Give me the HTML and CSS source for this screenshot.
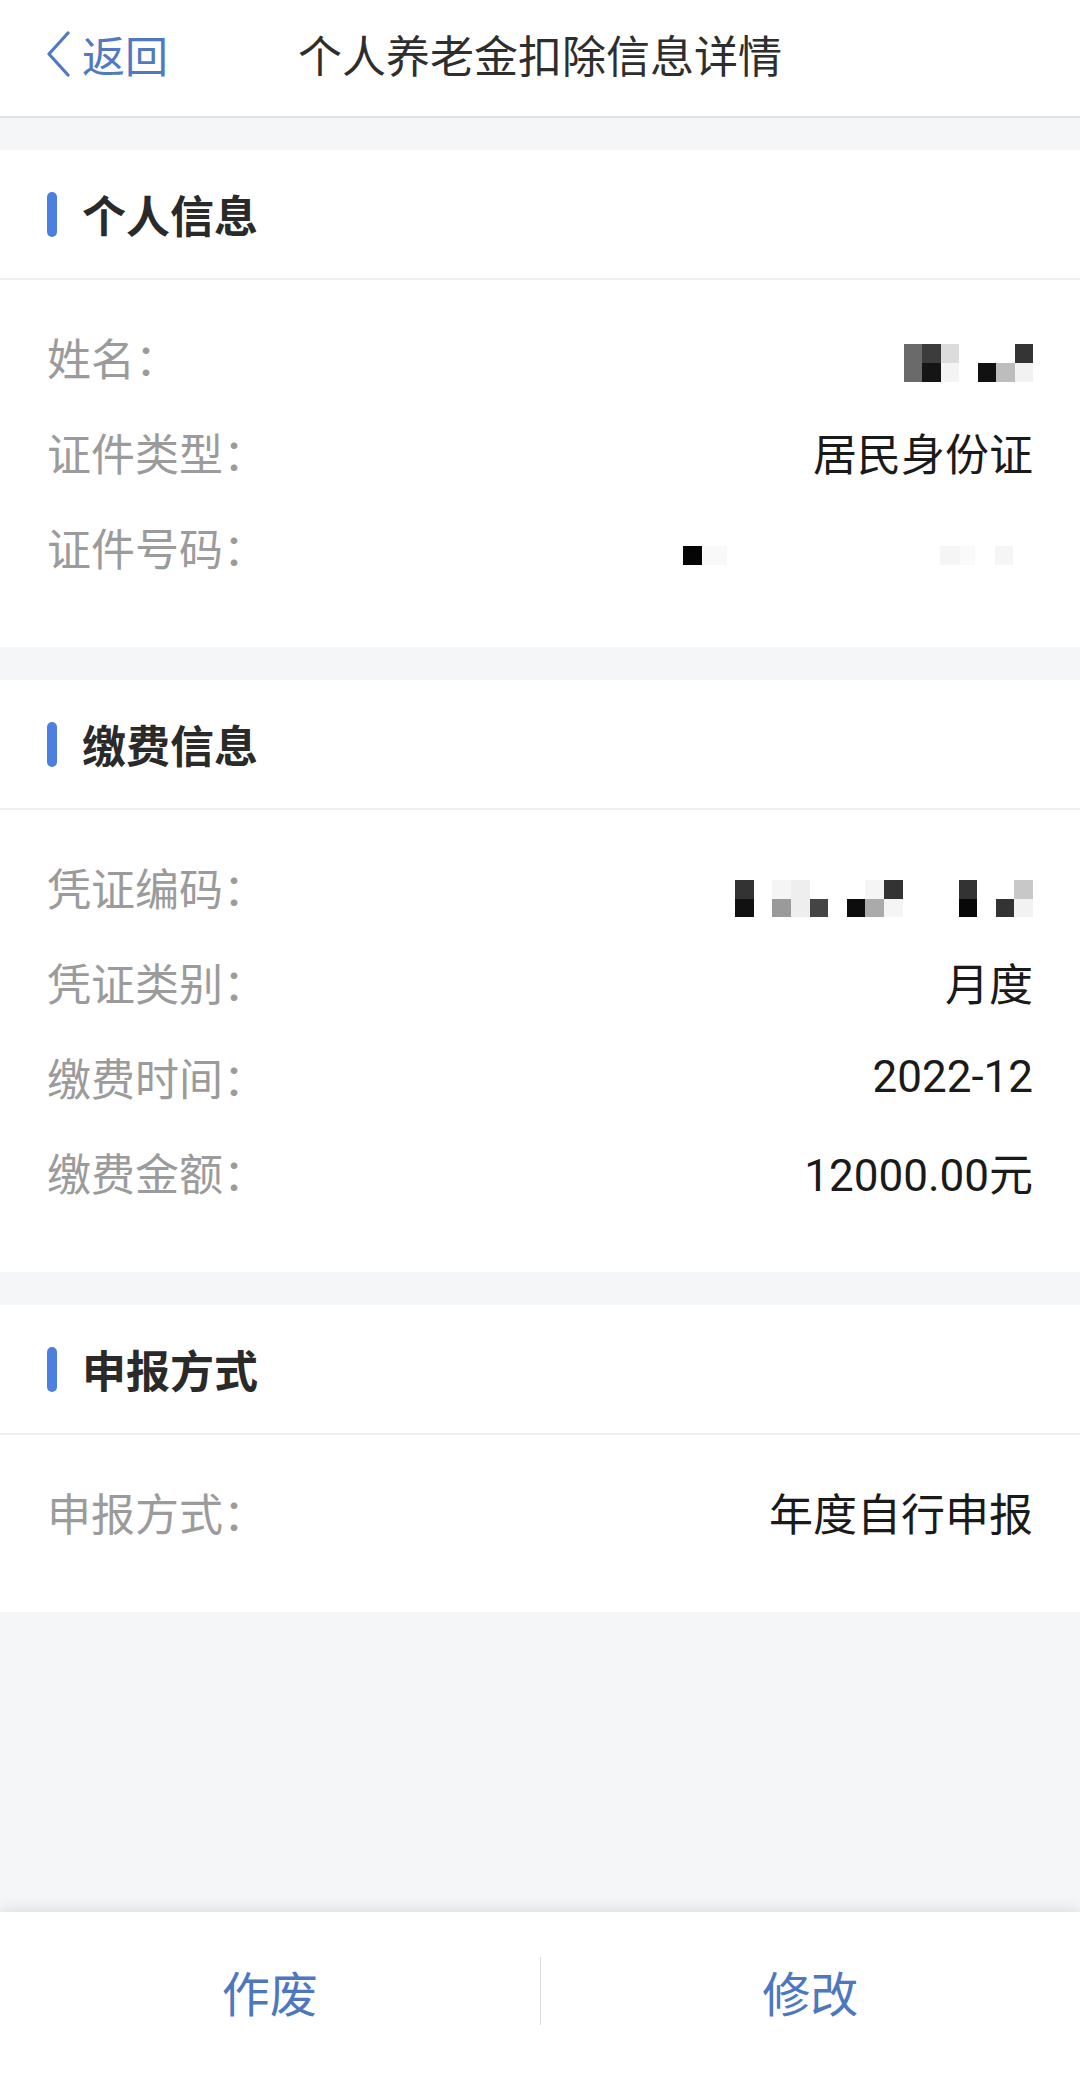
FILE: index.html
```html
<!DOCTYPE html>
<html lang="zh-CN">
<head>
  <meta charset="UTF-8">
  <title>个人养老金扣除信息详情</title>
  <meta name="viewport" content="width=device-width, initial-scale=1.0">
  <link rel="stylesheet" href="styles.css">
</head>
<body>

  <header class="nav-bar">
    <a class="nav-back" href="#">
      <svg class="nav-back-icon" width="26" height="46" viewBox="0 0 26 46">
        <path d="M23 2 L4 23 L23 44" fill="none" stroke="#5179c1" stroke-width="3.2" stroke-linecap="round" stroke-linejoin="round"/>
      </svg>
      <span>返回</span>
    </a>
    <h1 class="nav-title">个人养老金扣除信息详情</h1>
    <div></div>
  </header>

  <main class="page-body">

    <section class="info-card">
      <div class="card-head"><span class="card-mark"></span><h2>个人信息</h2></div>
      <div class="card-rows">
        <div class="info-row">
          <span class="info-label">姓名：</span>
          <svg class="mosaic mosaic-name" width="129" height="38" viewBox="0 0 7 2" preserveAspectRatio="none" shape-rendering="crispEdges">
            <rect x="0" y="0" width="1" height="2" fill="#6a6a6a"/>
            <rect x="1" y="0" width="1" height="1" fill="#3c3c3c"/>
            <rect x="1" y="1" width="1" height="1" fill="#151515"/>
            <rect x="2" y="0" width="1" height="1" fill="#dcdcdc"/>
            <rect x="2" y="1" width="1" height="1" fill="#f4f4f4"/>
            <rect x="4" y="1" width="1" height="1" fill="#111"/>
            <rect x="5" y="1" width="1" height="1" fill="#bdbdbd"/>
            <rect x="6" y="0" width="1" height="1" fill="#343434"/>
            <rect x="6" y="1" width="1" height="1" fill="#f2f2f2"/>
          </svg>
        </div>
        <div class="info-row">
          <span class="info-label">证件类型：</span>
          <span class="info-value">居民身份证</span>
        </div>
        <div class="info-row">
          <span class="info-label">证件号码：</span>
          <svg class="mosaic mosaic-id" width="350" height="19" viewBox="0 0 350 19" shape-rendering="crispEdges">
            <rect x="0" y="0" width="19" height="19" fill="#050505"/>
            <rect x="20" y="0" width="24" height="19" fill="#f9f9f9"/>
            <rect x="257" y="0" width="20" height="19" fill="#f5f5f5"/>
            <rect x="277" y="0" width="15" height="19" fill="#fafafa"/>
            <rect x="312" y="0" width="18" height="19" fill="#f5f5f5"/>
          </svg>
        </div>
      </div>
    </section>

    <section class="info-card">
      <div class="card-head"><span class="card-mark"></span><h2>缴费信息</h2></div>
      <div class="card-rows">
        <div class="info-row">
          <span class="info-label">凭证编码：</span>
          <svg class="mosaic mosaic-code" width="298" height="37" viewBox="0 0 16 2" preserveAspectRatio="none" shape-rendering="crispEdges">
            <rect x="0" y="0" width="1" height="1" fill="#333"/>
            <rect x="0" y="1" width="1" height="1" fill="#111"/>
            <rect x="2" y="0" width="1" height="1" fill="#f5f5f5"/>
            <rect x="2" y="1" width="1" height="1" fill="#9a9a9a"/>
            <rect x="3" y="0" width="1" height="2" fill="#eeeeee"/>
            <rect x="4" y="1" width="1" height="1" fill="#444"/>
            <rect x="6" y="1" width="1" height="1" fill="#0d0d0d"/>
            <rect x="7" y="0" width="1" height="1" fill="#f5f5f5"/>
            <rect x="7" y="1" width="1" height="1" fill="#aaaaaa"/>
            <rect x="8" y="0" width="1" height="1" fill="#333"/>
            <rect x="8" y="1" width="1" height="1" fill="#f5f5f5"/>
            <rect x="12" y="0" width="1" height="1" fill="#333"/>
            <rect x="12" y="1" width="1" height="1" fill="#080808"/>
            <rect x="14" y="1" width="1" height="1" fill="#333"/>
            <rect x="15" y="0" width="1" height="1" fill="#c8c8c8"/>
            <rect x="15" y="1" width="1" height="1" fill="#f2f2f2"/>
          </svg>
        </div>
        <div class="info-row">
          <span class="info-label">凭证类别：</span>
          <span class="info-value">月度</span>
        </div>
        <div class="info-row">
          <span class="info-label">缴费时间：</span>
          <span class="info-value">2022-12</span>
        </div>
        <div class="info-row">
          <span class="info-label">缴费金额：</span>
          <span class="info-value">12000.00元</span>
        </div>
      </div>
    </section>

    <section class="info-card">
      <div class="card-head"><span class="card-mark"></span><h2>申报方式</h2></div>
      <div class="card-rows">
        <div class="info-row">
          <span class="info-label">申报方式：</span>
          <span class="info-value">年度自行申报</span>
        </div>
      </div>
    </section>

  </main>

  <footer class="action-bar">
    <button class="action-btn" type="button">作废</button>
    <span class="action-divider"></span>
    <button class="action-btn" type="button">修改</button>
  </footer>

</body>
</html>
```

FILE: styles.css
```css
html, body {
  height: 100%;
}

body {
  margin: 0;
  display: flex;
  flex-direction: column;
  font-family: Roboto, "Noto Sans CJK SC", sans-serif;
  background: #f5f6f8;
  color: #1c1c1c;
}

/* top navigation */
.nav-bar {
  height: 118px;
  box-sizing: border-box;
  padding-bottom: 8px;
  flex-shrink: 0;
  display: grid;
  grid-template-columns: 1fr auto 1fr;
  align-items: center;
  background: #fff;
  border-bottom: 2px solid #e1e2e4;
}

.nav-back {
  display: flex;
  align-items: center;
  gap: 11px;
  padding-left: 45px;
  color: #5179c1;
  font-size: 43px;
  text-decoration: none;
}

.nav-title {
  margin: 0;
  font-size: 44px;
  font-weight: 400;
  color: #2e2e2e;
}

/* content */
.page-body {
  flex: 1;
  padding-top: 32px;
}

.info-card {
  background: #fff;
  margin-bottom: 33px;
}

.card-head {
  height: 128px;
  display: flex;
  align-items: center;
  padding-left: 47px;
  border-bottom: 2px solid #eeeff1;
}

.card-mark {
  width: 10px;
  height: 45px;
  border-radius: 5px;
  background: #4d7fe0;
  margin-right: 25px;
}

.card-head h2 {
  margin: 0;
  font-size: 44px;
  font-weight: 700;
  color: #2a2a2a;
}

.card-rows {
  padding: 29px 47px 53px;
}

.info-row {
  height: 95px;
  display: flex;
  align-items: center;
  justify-content: space-between;
  font-size: 44px;
}

.info-label {
  color: #9b9b9b;
}

.info-value {
  color: #1a1a1a;
}

.mosaic {
  display: block;
}

.mosaic-name {
  margin-top: 12px;
}

.mosaic-id {
  margin-top: 17px;
}

.mosaic-code {
  margin-top: 23px;
}

/* bottom actions */
.action-bar {
  height: 170px;
  flex-shrink: 0;
  display: flex;
  align-items: center;
  padding-bottom: 12px;
  box-sizing: border-box;
  background: #fff;
  box-shadow: 0 -5px 12px rgba(0,0,0,0.08);
}

.action-btn {
  flex: 1;
  height: 100%;
  border: none;
  background: none;
  font-family: inherit;
  font-size: 48px;
  color: #4d77bf;
  padding: 0;
}

.action-divider {
  width: 1px;
  height: 68px;
  background: #dcdcdc;
}
```
